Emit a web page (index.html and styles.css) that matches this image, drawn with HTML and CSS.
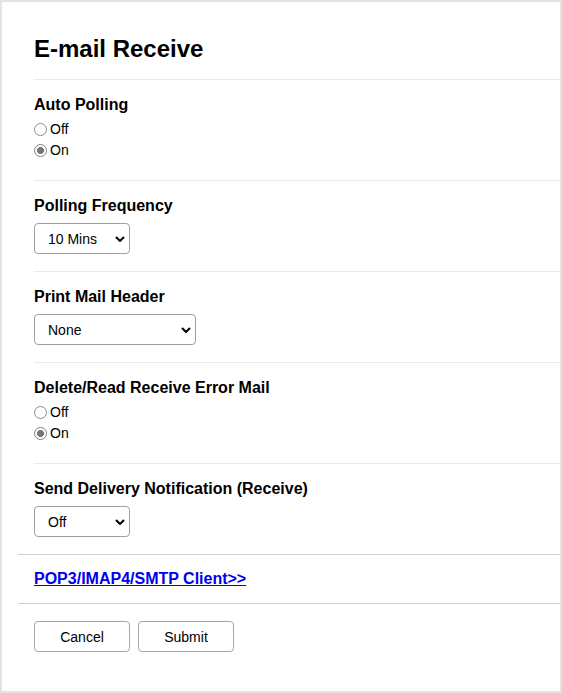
FILE: index.html
```html
<!DOCTYPE html>
<html lang="en">
<head>
<meta charset="utf-8">
<title>E-mail Receive</title>
<link rel="stylesheet" href="styles.css">
</head>
<body>
<div class="page">
  <header class="head"><h1 class="title">E-mail Receive</h1></header>

  <section class="field">
    <div class="label">Auto Polling</div>
    <div class="radios">
      <label class="radio"><input type="radio" name="ap"><span>Off</span></label>
      <label class="radio"><input type="radio" name="ap" checked><span>On</span></label>
    </div>
  </section>

  <section class="field field-select">
    <div class="label">Polling Frequency</div>
    <span class="sel sel-sm">
      <select><option>10 Mins</option></select>
      <svg class="chev" width="10" height="6" viewBox="0 0 10 6"><path d="M1 1 L5 5 L9 1" fill="none" stroke="#000" stroke-width="2"/></svg>
    </span>
  </section>

  <section class="field field-select">
    <div class="label">Print Mail Header</div>
    <span class="sel sel-lg">
      <select><option>None</option></select>
      <svg class="chev" width="10" height="6" viewBox="0 0 10 6"><path d="M1 1 L5 5 L9 1" fill="none" stroke="#000" stroke-width="2"/></svg>
    </span>
  </section>

  <section class="field">
    <div class="label">Delete/Read Receive Error Mail</div>
    <div class="radios">
      <label class="radio"><input type="radio" name="dr"><span>Off</span></label>
      <label class="radio"><input type="radio" name="dr" checked><span>On</span></label>
    </div>
  </section>

  <section class="field field-select field-last">
    <div class="label">Send Delivery Notification (Receive)</div>
    <span class="sel sel-sm">
      <select><option>Off</option></select>
      <svg class="chev" width="10" height="6" viewBox="0 0 10 6"><path d="M1 1 L5 5 L9 1" fill="none" stroke="#000" stroke-width="2"/></svg>
    </span>
  </section>

  <div class="linkbar"><a class="link" href="#">POP3/IMAP4/SMTP Client&gt;&gt;</a></div>

  <div class="actions">
    <button class="btn" type="button">Cancel</button>
    <button class="btn" type="button">Submit</button>
  </div>
</div>
</body>
</html>
```
FILE: styles.css
```css
html, body {
  margin: 0;
  padding: 0;
  background: #fff;
}
body {
  font-family: Arial, "Liberation Sans", sans-serif;
  color: #000;
}
.page {
  box-sizing: border-box;
  width: 562px;
  height: 693px;
  border: 2px solid #e3e3e3;
  padding-left: 16px;
}
.head {
  margin-left: 16px;
  padding: 33px 0 16px;
  border-bottom: 1px solid #ebebeb;
}
.title {
  margin: 0;
  font-size: 24px;
  line-height: 28px;
  font-weight: bold;
}
.field {
  margin-left: 16px;
  padding: 15px 0 19px;
  border-bottom: 1px solid #ebebeb;
}
.field-select {
  padding-bottom: 17px;
}
.field-last {
  border-bottom: none;
}
.label {
  font-size: 16px;
  line-height: 19px;
  font-weight: bold;
}
.radios {
  margin-top: 5px;
  display: flex;
  flex-direction: column;
}
.radio {
  display: flex;
  align-items: center;
  height: 21px;
  font-size: 14px;
  line-height: 21px;
}
.radio input {
  appearance: none;
  -webkit-appearance: none;
  box-sizing: border-box;
  width: 13px;
  height: 13px;
  margin: -1px 3px 0 0;
  border: 1px solid #8c8c8c;
  border-radius: 50%;
  background: #fff;
}
.radio input:checked {
  border-color: #808080;
  background: radial-gradient(circle, #767676 0 3.2px, #fff 3.8px);
}
.sel {
  position: relative;
  display: block;
  margin-top: 8px;
}
.sel select {
  appearance: none;
  -webkit-appearance: none;
  box-sizing: border-box;
  height: 31px;
  margin: 0;
  padding: 0 0 0 13px;
  border: 1px solid #a0a0a0;
  border-radius: 4px;
  background: #fff;
  font-family: Arial, "Liberation Sans", sans-serif;
  font-size: 14px;
  color: #000;
}
.sel-sm select { width: 96px; }
.sel-lg select { width: 162px; }
.chev {
  position: absolute;
  top: 13px;
  pointer-events: none;
}
.sel-sm .chev { left: 81px; }
.sel-lg .chev { left: 147px; }
.linkbar {
  padding: 14px 0 15px 16px;
  border-top: 1px solid #d0d0d0;
  border-bottom: 1px solid #d0d0d0;
  line-height: 19px;
}
.link {
  font-size: 16px;
  font-weight: bold;
  color: #0000ee;
  text-decoration: underline;
}
.actions {
  display: flex;
  gap: 8px;
  padding: 17px 0 0 16px;
}
.btn {
  box-sizing: border-box;
  width: 96px;
  height: 31px;
  margin: 0;
  padding: 0;
  border: 1px solid #a6a6a6;
  border-radius: 4px;
  background: #fff;
  font-family: Arial, "Liberation Sans", sans-serif;
  font-size: 14px;
  color: #000;
}
```
